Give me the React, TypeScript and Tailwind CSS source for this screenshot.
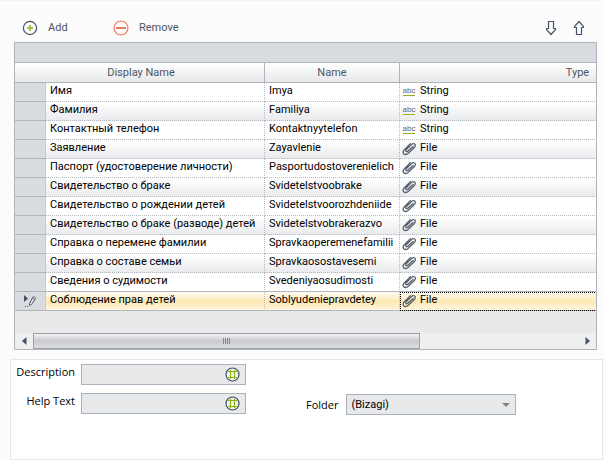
import React from "react";

type Row = { display: string; name: string; type: "String" | "File" };

const rows: Row[] = [
  { display: "Имя", name: "Imya", type: "String" },
  { display: "Фамилия", name: "Familiya", type: "String" },
  { display: "Контактный телефон", name: "Kontaktnyytelefon", type: "String" },
  { display: "Заявление", name: "Zayavlenie", type: "File" },
  { display: "Паспорт (удостоверение личности)", name: "Pasportudostoverenielich", type: "File" },
  { display: "Свидетельство о браке", name: "Svidetelstvoobrake", type: "File" },
  { display: "Свидетельство о рождении детей", name: "Svidetelstvoorozhdeniide", type: "File" },
  { display: "Свидетельство о браке (разводе) детей", name: "Svidetelstvobrakerazvo", type: "File" },
  { display: "Справка о перемене фамилии", name: "Spravkaoperemenefamilii", type: "File" },
  { display: "Справка о составе семьи", name: "Spravkaosostavesemi", type: "File" },
  { display: "Сведения о судимости", name: "Svedeniyaosudimosti", type: "File" },
  { display: "Соблюдение прав детей", name: "Soblyudeniepravdetey", type: "File" },
];

const selectedIndex = rows.length - 1;

function AddIcon() {
  return (
    <svg width="16" height="16" viewBox="0 0 16 16" fill="none" aria-hidden="true">
      <circle cx="8" cy="8" r="6.6" stroke="#44566b" strokeWidth="1.2" />
      <path d="M8 5v6M5 8h6" stroke="#a3bf4f" strokeWidth="2" />
    </svg>
  );
}

function RemoveIcon() {
  return (
    <svg width="16" height="16" viewBox="0 0 16 16" fill="none" aria-hidden="true">
      <circle cx="8" cy="8" r="7" stroke="#f0795c" strokeWidth="1.2" />
      <path d="M3 8h10" stroke="#f0795c" strokeWidth="2" />
    </svg>
  );
}

function ArrowIcon({ up = false }: { up?: boolean }) {
  return (
    <svg width="12" height="16" viewBox="0 0 12 16" fill="none" aria-hidden="true">
      <path
        d={up ? "M6 1.5 10.5 6.5V7.5H8.5V14.5H3.5V7.5H1.5V6.5Z" : "M6 14.5 10.5 9.5V8.5H8.5V1.5H3.5V8.5H1.5V9.5Z"}
        stroke="#44566b"
        strokeWidth="1.2"
      />
    </svg>
  );
}

function ClipIcon() {
  return (
    <svg className="shrink-0" width="16" height="16" viewBox="0 0 16 16" fill="none" aria-hidden="true">
      <path
        d="M12 6.5 6.8 11.2C5.5 12.4 4 11.2 5.2 9.8L10.4 4.6C12.6 2.4 15.8 4.6 13.6 7.2L7 13.4C3.8 16 .6 13.2 3 10.2L9.4 3.6"
        stroke="#56616e"
        strokeWidth="1.3"
        strokeLinecap="round"
      />
    </svg>
  );
}

function EditMark() {
  return (
    <svg className="mx-auto" width="14" height="14" viewBox="0 0 14 14" fill="none" aria-hidden="true">
      <path d="M1 1v7l4-3.5z" fill="#44505f" />
      <path d="M6.5 9.5 9.5 3.5 11 2.5 12.5 4 12 5.5 8.5 10.5 6.5 11.5ZM9.5 4 11.5 5.5" stroke="#56606c" />
      <path d="M2 12.5h1M4 12.5h1" stroke="#56606c" />
    </svg>
  );
}

function HashIcon() {
  return (
    <svg width="15" height="15" viewBox="0 0 15 15" fill="none" aria-hidden="true">
      <circle cx="7.5" cy="7.5" r="6.5" fill="#f2f4ee" stroke="#3c4c66" strokeWidth="1.2" />
      <path d="M5.5 3v9M9.5 3v9M3 4.5h9M3 10.5h9" stroke="#8db51c" strokeWidth="1.2" />
    </svg>
  );
}

function TypeLabel({ type }: { type: Row["type"] }) {
  return (
    <span className="flex items-start gap-[3px]">
      {type === "String" ? (
        <span className="flex w-4 flex-col items-center pt-[3px]" aria-hidden="true">
          <span className="h-[9px] font-['Liberation_Sans',sans-serif] text-[8px] leading-[9px] text-[#5d6672]">
            abc
          </span>
          <span className="h-px w-3 bg-[#92b418]" />
        </span>
      ) : (
        <ClipIcon />
      )}
      <span>{type}</span>
    </span>
  );
}

function GridRow({ row, index }: { row: Row; index: number }) {
  const selected = index === selectedIndex;
  const beforeSelected = index === selectedIndex - 1;
  const fill = selected
    ? "bg-linear-to-b from-[#fffdf5] from-0% via-[#fde8b3] via-50% to-[#fff8e4] to-100%"
    : index % 2
      ? "bg-linear-to-b from-white to-[#e9eaec]"
      : "bg-white";
  const line = selected || beforeSelected ? "border-b border-b-[#b0b5bd]" : "border-b border-b-[#b4b8bf] [border-bottom-style:dotted]";
  const cell = `h-[19px] p-0 align-top whitespace-nowrap ${line}`;
  const divider = "pl-1 border-r border-r-[#b4b8bf] [border-right-style:dotted]";
  const focus = selected ? "outline-1 -outline-offset-1 outline-black outline-dotted" : "";
  return (
    <tr className={fill}>
      <td className="h-[19px] border-r border-b border-r-[#b4b8bf] border-b-[#b0b5bd] bg-[#d8dbe0] p-0 align-middle [border-right-style:dotted]">
        {selected && <EditMark />}
      </td>
      <td className={`${cell} ${divider}`}>{row.display}</td>
      <td className={`${cell} ${divider}`}>{row.name}</td>
      <td className={`${cell} pl-px ${focus}`}>
        <TypeLabel type={row.type} />
      </td>
    </tr>
  );
}

function LocalizedField({ id, label }: { id: string; label: string }) {
  return (
    <div className="flex items-start gap-[6px]">
      <label htmlFor={id} className="w-16 text-right leading-4 whitespace-nowrap">
        {label}
      </label>
      <div className="flex h-[21px] w-[165px] items-center border border-[#a9b2bc] bg-[#e8e9eb] pr-[5px]">
        <input id={id} type="text" className="h-full min-w-0 flex-1 bg-transparent px-1 outline-none" />
        <button type="button" aria-label={`${label} languages`}>
          <HashIcon />
        </button>
      </div>
    </div>
  );
}

export default function App() {
  const head = "h-5 border-b border-[#b0b5bd] p-0 text-center font-normal text-[#4d5562]";
  return (
    <main className="flex min-h-screen flex-col border-t border-[#f5f5f5] bg-[#fcfcfc] font-['Roboto','Liberation_Sans',sans-serif] text-[11px] leading-4 text-black">
      <div className="flex h-[41px] items-center pt-3 pr-5 pl-[22px] text-[#4d5562]">
        <button type="button" className="flex w-[91px] items-center gap-[10px]">
          <AddIcon />
          Add
        </button>
        <button type="button" className="flex items-center gap-[10px]">
          <RemoveIcon />
          Remove
        </button>
        <button type="button" className="ml-auto" aria-label="Move down">
          <ArrowIcon />
        </button>
        <button type="button" className="ml-4" aria-label="Move up">
          <ArrowIcon up />
        </button>
      </div>

      <section className="mr-2 ml-[14px] border border-[#b0b5bd] bg-[#e8e9eb]">
        <div className="h-5 border-b border-[#b0b5bd] bg-[#d8dbe0]" />
        <div className="overflow-hidden">
          <table className="w-[740px] table-fixed border-separate border-spacing-0">
            <colgroup>
              <col className="w-[31px]" />
              <col className="w-[219px]" />
              <col className="w-[135px]" />
              <col className="w-[355px]" />
            </colgroup>
            <thead className="bg-linear-to-b from-white to-[#e6e7e9]">
              <tr>
                <th className={head} aria-label="Row" />
                <th className={`${head} border-r pr-7`}>Display Name</th>
                <th className={`${head} border-r`}>Name</th>
                <th className={head}>Type</th>
              </tr>
            </thead>
            <tbody>
              {rows.map((row, index) => (
                <GridRow key={row.name} row={row} index={index} />
              ))}
            </tbody>
          </table>
        </div>
        <div className="mt-[22px] flex h-4 bg-[#efeff0]">
          <button type="button" className="flex w-[18px] items-center justify-center" aria-label="Scroll left">
            <svg width="5" height="8" viewBox="0 0 5 8" aria-hidden="true">
              <path d="M4.5 0v8L0 4z" fill="#44506f" />
            </svg>
          </button>
          <div className="flex-1">
            <div className="flex h-full w-[71%] items-center justify-center gap-px border border-[#9c9fa3] bg-linear-to-b from-[#f3f3f4] via-[#c9cbce] to-[#dcdddf]">
              <i className="h-[6px] w-px bg-[#85888c]" />
              <i className="h-[6px] w-px bg-[#85888c]" />
              <i className="h-[6px] w-px bg-[#85888c]" />
              <i className="h-[6px] w-px bg-[#85888c]" />
            </div>
          </div>
          <button type="button" className="flex w-[18px] items-center justify-center" aria-label="Scroll right">
            <svg width="5" height="8" viewBox="0 0 5 8" aria-hidden="true">
              <path d="M.5 0v8L5 4z" fill="#44506f" />
            </svg>
          </button>
        </div>
      </section>

      <section className="mt-[9px] mr-0.5 ml-[10px] flex flex-1 border border-[#e6e7e8] bg-white pt-1 font-['Open_Sans','Noto_Sans',sans-serif]">
        <div className="flex flex-col gap-2">
          <LocalizedField id="description" label="Description" />
          <LocalizedField id="help-text" label="Help Text" />
        </div>
        <div className="mt-[30px] ml-[60px] flex items-start gap-2">
          <label htmlFor="folder" className="leading-[21px]">
            Folder
          </label>
          <div className="grid h-[21px] w-[170px] items-center border border-[#a9b2bc] bg-[#e8e9eb] font-['Roboto','Liberation_Sans',sans-serif]">
            <select
              id="folder"
              className="col-start-1 row-start-1 h-full w-full appearance-none bg-transparent pl-1 outline-none"
            >
              <option>(Bizagi)</option>
            </select>
            <svg
              className="pointer-events-none col-start-1 row-start-1 mr-[5px] justify-self-end"
              width="8"
              height="4"
              viewBox="0 0 8 4"
              aria-hidden="true"
            >
              <path d="M0 0h8L4 4z" fill="#808386" />
            </svg>
          </div>
        </div>
      </section>
    </main>
  );
}
